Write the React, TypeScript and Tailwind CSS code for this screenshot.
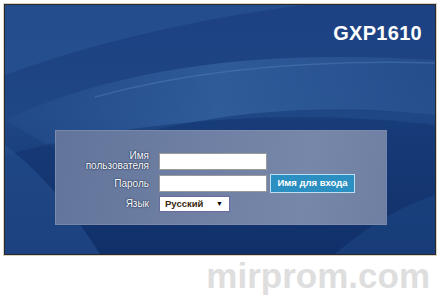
import React from 'react';

const Swooshes: React.FC = () => (
  <svg className="absolute inset-0 h-full w-full" viewBox="0 0 430 249" preserveAspectRatio="none">
    <defs>
      <linearGradient id="bg" x1="0" y1="0" x2="0" y2="1">
        <stop offset="0" stopColor="#1d4183" />
        <stop offset="0.45" stopColor="#1f4685" />
        <stop offset="1" stopColor="#12306a" />
      </linearGradient>
      <linearGradient id="band" x1="0" y1="0" x2="1" y2="0">
        <stop offset="0" stopColor="#3a6aa8" stopOpacity="0.1" />
        <stop offset="0.5" stopColor="#3d6eab" stopOpacity="0.55" />
        <stop offset="1" stopColor="#3a6aa8" stopOpacity="0.25" />
      </linearGradient>
      <linearGradient id="panel" x1="0" y1="0" x2="1" y2="0">
        <stop offset="0" stopColor="#64759c" />
        <stop offset="0.6" stopColor="#7485a8" />
        <stop offset="1" stopColor="#7081a5" />
      </linearGradient>
    </defs>
    <rect width="430" height="249" fill="url(#bg)" />
    {/* upper left lighter sweep */}
    <path d="M0 0 H300 C220 10 110 30 0 70 Z" fill="#2a5797" opacity="0.55" />
    {/* middle band */}
    <path d="M0 115 C120 60 260 45 430 55 V110 C300 95 180 110 60 150 Z" fill="url(#band)" />
    <path d="M90 92 C200 62 320 55 430 58" stroke="#5f8cc4" strokeOpacity="0.35" strokeWidth="1.5" fill="none" />
    {/* darker lower area */}
    <path d="M0 150 C150 110 300 105 430 120 V249 H0 Z" fill="#10306a" opacity="0.45" />
    {/* lower left light curve */}
    <path d="M0 140 C40 170 70 210 95 249 H0 Z" fill="#2c5899" opacity="0.45" />
    <path d="M330 249 C370 215 400 200 430 190 V249 Z" fill="#24508f" opacity="0.4" />
  </svg>
);

const fieldLabel = 'text-right text-[10px] leading-[10px] text-white [text-shadow:0_0_1px_#1b2a4a,0_0_2px_#1b2a4a]';

const App: React.FC = () => {
  return (
    <div className="h-[305px] w-[440px] bg-white font-['Liberation_Sans',Arial,sans-serif]">
      <div className="pl-[4px] pt-[4px]">
        <div className="relative h-[251px] w-[432px] overflow-hidden border border-[#2a2a2a] shadow-[0_0_0_1px_#d9d2c4]">
          <Swooshes />
          <div className="relative flex flex-col">
            <div className="flex justify-end pr-[13px] pt-[18px]">
              <span className="text-[20px] font-bold leading-[20px] tracking-[0.3px] text-white">GXP1610</span>
            </div>
            <div className="ml-[50px] mt-[87px] h-[95px] w-[332px] border border-[#8796b6]/50 bg-[linear-gradient(100deg,#63749b_0%,#6f80a4_45%,#7687a9_75%,#6e7fa3_100%)] pt-[20px]">
              <div className="grid grid-cols-[93px_108px_auto] items-center gap-x-[10px] gap-y-[3px]">
                <div className={fieldLabel}>
                  Имя
                  <br />
                  пользователя
                </div>
                <div className="h-[17px] w-[108px] border border-[#9a9a9a] bg-white" />
                <div />
                <div className={fieldLabel}>Пароль</div>
                <div className="h-[17px] w-[108px] border border-[#9a9a9a] bg-white" />
                <div className="-ml-[7px] flex h-[19px] w-[85px] items-center justify-center border border-[#b9dff0] bg-[#2b8fc2] text-[9.5px] font-bold text-white">
                  Имя для входа
                </div>
                <div className={fieldLabel}>Язык</div>
                <div className="flex h-[16px] w-[71px] items-center justify-between border border-[#6a6aa0] bg-white pl-[5px] pr-[6px] text-[9.5px] font-bold text-[#3a2a10]">
                  <span>Русский</span>
                  <span className="text-[7px] text-black">▼</span>
                </div>
                <div />
              </div>
            </div>
          </div>
        </div>
      </div>
      <div className="flex justify-end pr-[10px] pt-[2px]">
        <span className="text-[35px] font-bold leading-[38px] text-[#dedede]">mirprom.com</span>
      </div>
    </div>
  );
};

export default App;
